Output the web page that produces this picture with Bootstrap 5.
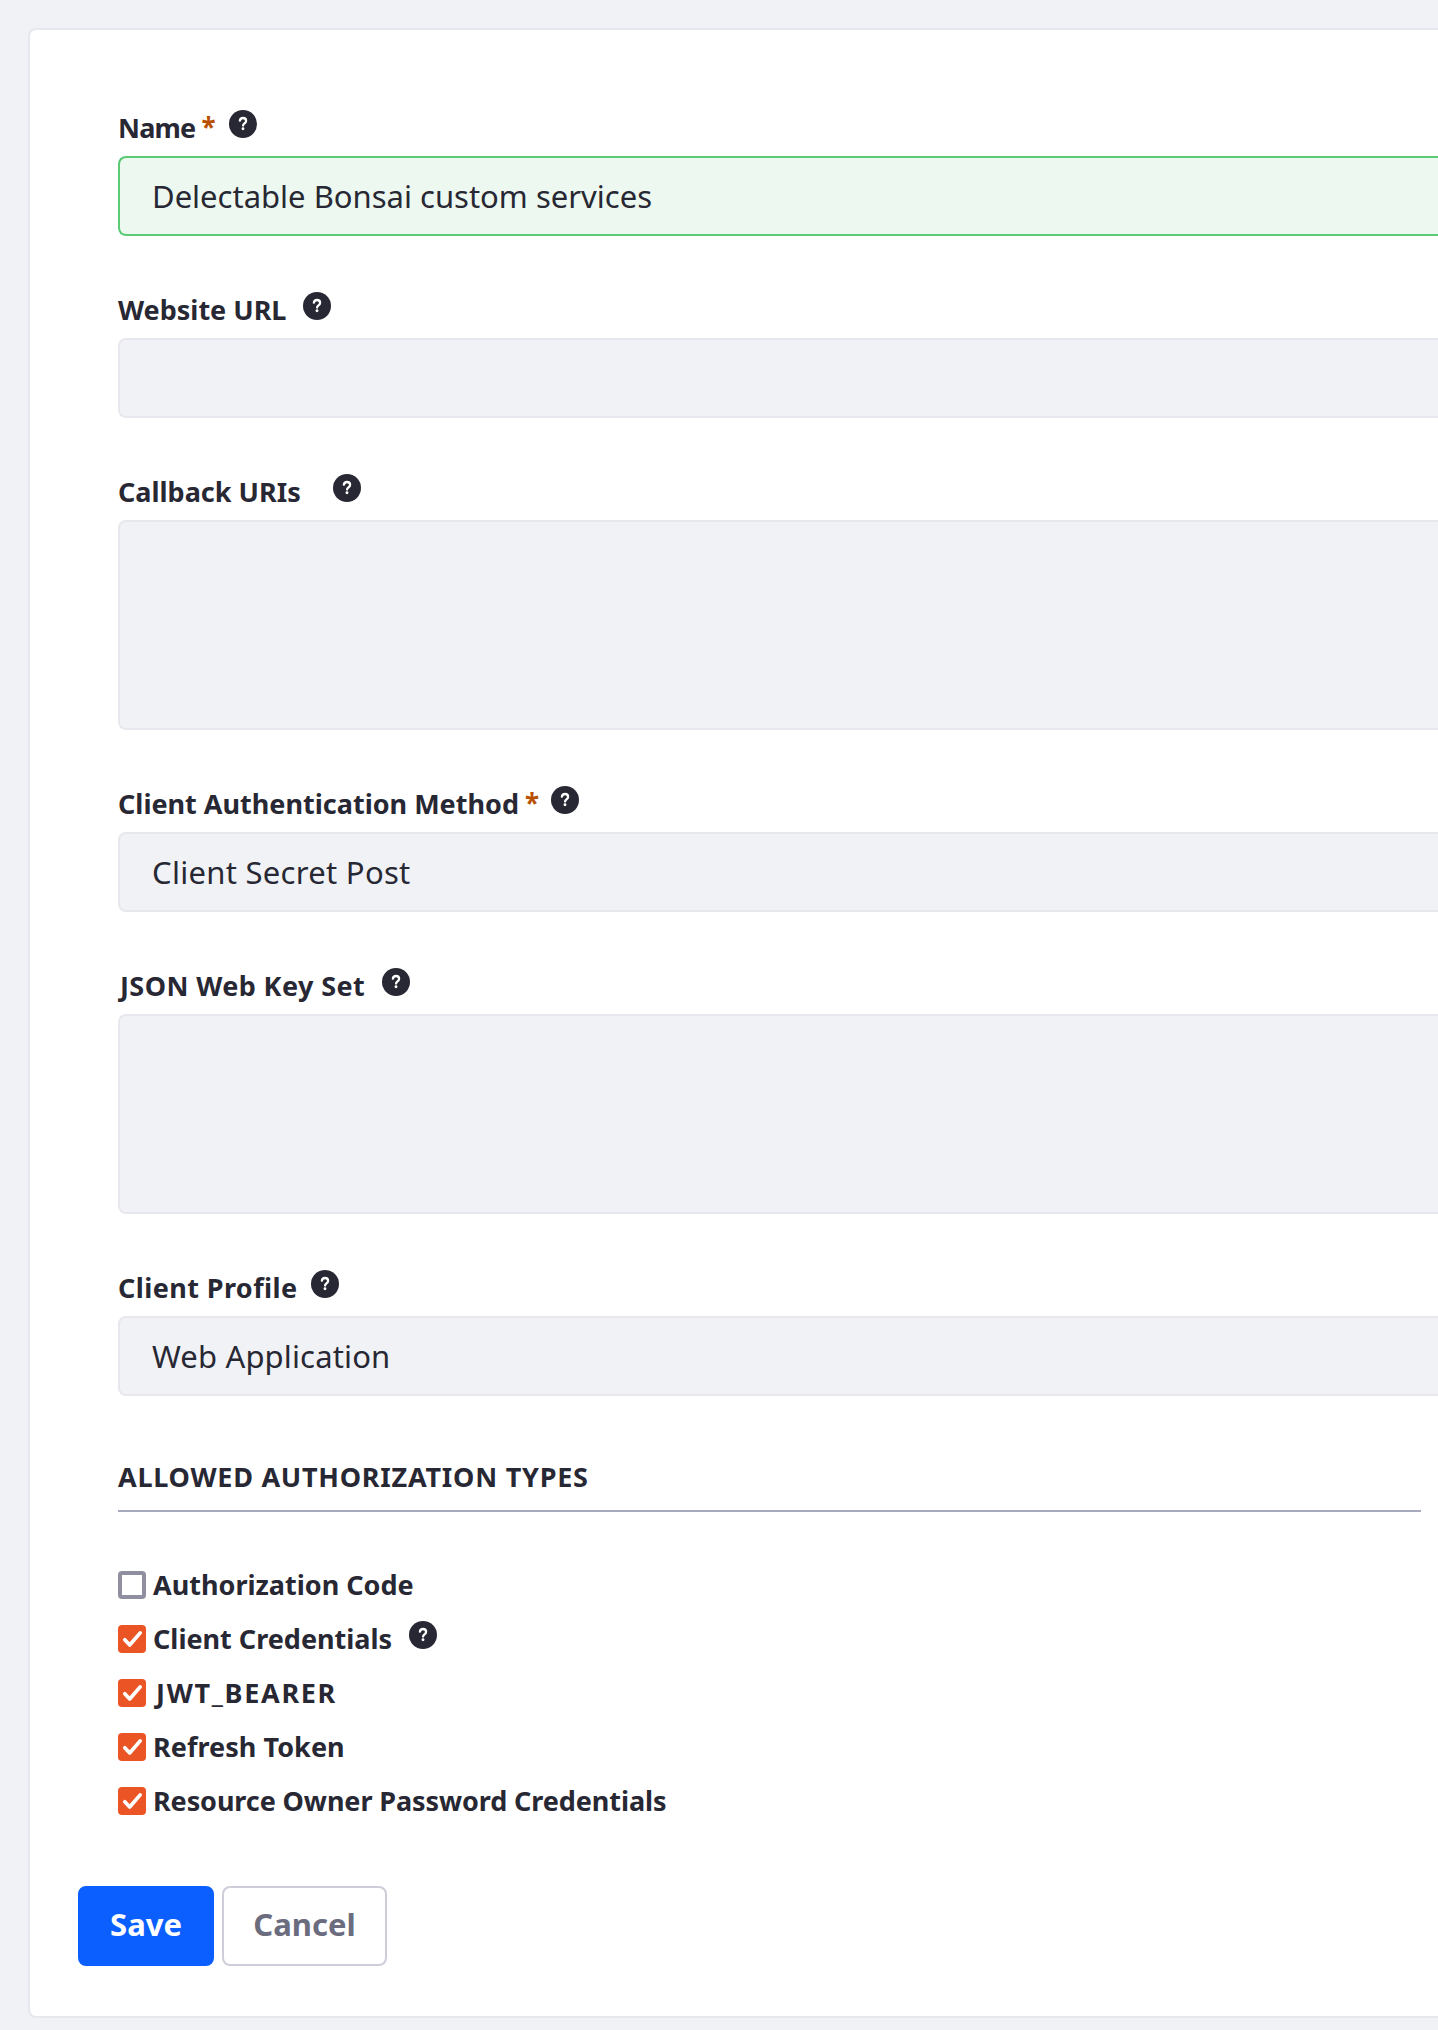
<!DOCTYPE html>
<html lang="en">
<head>
<meta charset="utf-8">
<meta name="viewport" content="width=device-width, initial-scale=1">
<title>OAuth 2 Application</title>
<link href="https://cdn.jsdelivr.net/npm/bootstrap@5.3.0/dist/css/bootstrap.min.css" rel="stylesheet">
<style>
  body { background: #f1f2f5; color: #272833; font-family: "Noto Sans", "Open Sans", sans-serif; }
  .sheet { height: 1990px; margin: 28px 0 0 28px; padding: 80px 0 0 88px; border: 2px solid #e7e7ed; border-right: 0; border-radius: 8px 0 0 8px; }
  .caption { height: 46px; font-size: 27px; font-weight: 700; line-height: 35px; white-space: nowrap; }
  .field { margin-bottom: 56px; }
  .required { font-size: 26px; color: #b95000; margin-left: 6px; letter-spacing: -1.5px; }
  .help { width: 28px; height: 28px; flex: none; margin-left: 15px; }
  .field .form-control { height: 80px; padding: 0 32px; border: 2px solid #e7e7ed; border-right: 0; border-radius: 8px 0 0 8px; background: #f1f2f5; color: #272833; font-size: 31px; resize: none; }
  .field .form-control.approved { background: #edf8f0; border-color: #5aca75; }
  .field .tall { height: 210px; }
  .field .mid { height: 200px; }
  .section-title { font-size: 27px; font-weight: 700; line-height: 40px; letter-spacing: .75px; padding: 5px 0 13px; margin: 0 17px 59px 0; border-bottom: 2px solid #a7a9bc; }
  .option { height: 54px; font-size: 27px; font-weight: 700; line-height: 35px; white-space: nowrap; }
  .option .form-check-input { width: 28px; height: 28px; margin: 0 7px 0 0; border: 4px solid #8f8f9f; border-radius: 4px; flex: none; background: #fff; }
  .tick { width: 28px; height: 28px; margin-right: 7px; flex: none; }
  .option label { margin-top: -4px; }
  .option .help { margin: -4px 0 0 17px; }
  .actions { gap: 8px; margin: 45px 0 0 -40px; }
  .actions .btn { height: 80px; border: 2px solid; border-radius: 8px; font-size: 31px; font-weight: 700; padding: 0 0 3px; }
  .actions .save { width: 136px; background: #0b5fff; border-color: #0b5fff; color: #fff; }
  .actions .cancel { width: 165px; background: #fff; border-color: #cdced9; color: #6b6c7e; }
  .t-name { letter-spacing: -.8px; }
  .t-json { letter-spacing: .41px; padding-left: 2px; }
  .t-profile { letter-spacing: .41px; }
  .t-secret { letter-spacing: .29px; }
  .t-web { letter-spacing: .15px; }
  .t-jwt { letter-spacing: 1.7px; padding-left: 3px; }
  .t-refresh { letter-spacing: .05px; }
  .t-owner { letter-spacing: -.09px; }
  .help-far { margin-left: 32px; }
  .help-wide { margin-left: 16.5px; }
  .help-near { margin-left: 13.5px; }
</style>
<script src="https://cdn.jsdelivr.net/npm/bootstrap@5.3.0/dist/js/bootstrap.bundle.min.js"></script>
</head>
<body>
<svg class="d-none">
  <symbol id="q" viewBox="0 0 28 28"><circle cx="14" cy="14" r="14" fill="#272833"/><path d="M10.9 10.6c.2-1.5 1.4-2.6 3.1-2.6 1.8 0 3.1 1.1 3.1 2.7 0 1.3-.7 2-1.6 2.7-.9.7-1.4 1.1-1.4 2.1" fill="none" stroke="#fff" stroke-width="2.3" stroke-linecap="round"/><circle cx="14" cy="18.8" r="1.45" fill="#fff"/></symbol>
  <symbol id="c" viewBox="0 0 28 28"><rect width="28" height="28" rx="4" fill="#eb5424"/><path d="M6.8 14.8l4.9 5.2L22.2 7.9" fill="none" stroke="#fff" stroke-width="3.7" stroke-linecap="round" stroke-linejoin="round"/></symbol>
</svg>
<main class="sheet bg-white">
  <form>
    <div class="field">
      <div class="caption d-flex align-items-start"><label class="t-name">Name</label><span class="required">*</span><svg class="help"><use href="#q"/></svg></div>
      <input class="form-control approved" value="Delectable Bonsai custom services">
    </div>
    <div class="field">
      <div class="caption d-flex align-items-start"><label>Website URL</label><svg class="help help-wide"><use href="#q"/></svg></div>
      <input class="form-control">
    </div>
    <div class="field">
      <div class="caption d-flex align-items-start"><label>Callback URIs</label><svg class="help help-far"><use href="#q"/></svg></div>
      <textarea class="form-control tall"></textarea>
    </div>
    <div class="field">
      <div class="caption d-flex align-items-start"><label>Client Authentication Method</label><span class="required">*</span><svg class="help help-near"><use href="#q"/></svg></div>
      <input class="form-control t-secret" value="Client Secret Post">
    </div>
    <div class="field">
      <div class="caption d-flex align-items-start"><label class="t-json">JSON Web Key Set</label><svg class="help help-wide"><use href="#q"/></svg></div>
      <textarea class="form-control mid"></textarea>
    </div>
    <div class="field">
      <div class="caption d-flex align-items-start"><label class="t-profile">Client Profile</label><svg class="help help-near"><use href="#q"/></svg></div>
      <input class="form-control t-web" value="Web Application">
    </div>
    <h2 class="section-title">ALLOWED AUTHORIZATION TYPES</h2>
    <div class="option d-flex align-items-start"><input class="form-check-input" type="checkbox" id="o1"><label for="o1">Authorization Code</label></div>
    <div class="option d-flex align-items-start"><svg class="tick"><use href="#c"/></svg><label>Client Credentials</label><svg class="help"><use href="#q"/></svg></div>
    <div class="option d-flex align-items-start"><svg class="tick"><use href="#c"/></svg><label class="t-jwt">JWT_BEARER</label></div>
    <div class="option d-flex align-items-start"><svg class="tick"><use href="#c"/></svg><label class="t-refresh">Refresh Token</label></div>
    <div class="option d-flex align-items-start"><svg class="tick"><use href="#c"/></svg><label class="t-owner">Resource Owner Password Credentials</label></div>
    <div class="actions d-flex"><button type="button" class="btn save">Save</button><button type="button" class="btn cancel">Cancel</button></div>
  </form>
</main>
</body>
</html>
